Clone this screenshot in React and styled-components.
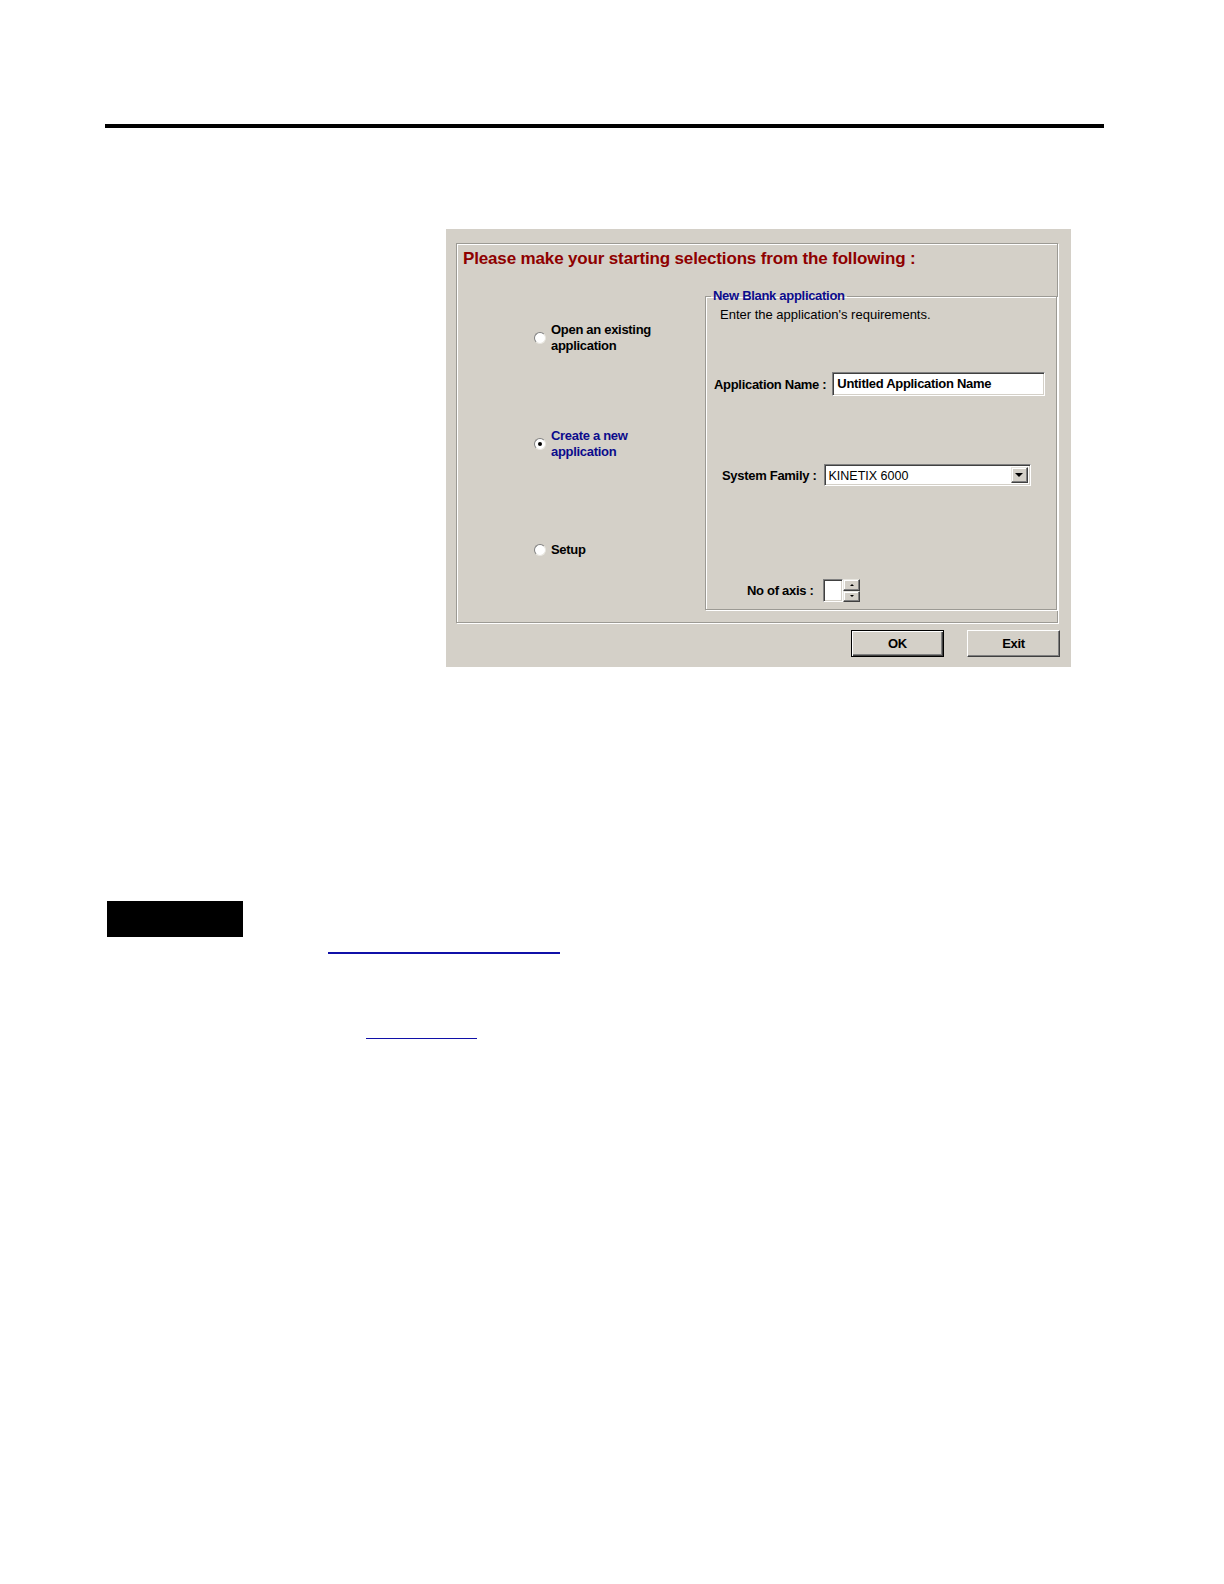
import styled, { createGlobalStyle } from "styled-components"

const Global = createGlobalStyle`
  html, body {
    margin: 0;
    background: #fff;
    overflow: hidden;
    font-family: "Liberation Sans", Arial, sans-serif;
  }
`

const Page = styled.div`
  height: 1584px;
  padding-top: 124px;
  box-sizing: border-box;
  overflow: hidden;
`

const Rule = styled.div`
  margin-left: 105px;
  width: 999px;
  height: 4px;
  background: #000;
`

const Shot = styled.div`
  margin: 101px 0 0 446px;
  width: 625px;
  height: 438px;
  box-sizing: border-box;
  background: #d4d0c8;
  padding: 14px 12px 10px 10px;
  font-size: 13px;
  color: #000;
`

const GroupBox = styled.div`
  width: 602px;
  height: 380px;
  box-sizing: border-box;
  border: 1px solid #9c9a94;
  box-shadow: inset 1px 1px 0 #fff, 1px 1px 0 #fff;
`

const Title = styled.div`
  padding: 5px 0 0 6px;
  height: 20px;
  line-height: 20px;
  font-size: 17px;
  font-weight: bold;
  letter-spacing: -0.15px;
  color: #8e0000;
`

const Content = styled.div`
  display: flex;
  margin-top: 20px;
`

const Choices = styled.div`
  width: 248px;
  padding-left: 77px;
  box-sizing: border-box;
  display: flex;
  flex-direction: column;
`

const Choice = styled.label`
  display: flex;
  align-items: center;
  margin-top: ${p => p.$top}px;
  font-weight: bold;
  letter-spacing: -0.3px;
  line-height: 16px;
  color: ${p => (p.$active ? "#0b0b8c" : "#000")};
`

const Radio = styled.span`
  position: relative;
  width: 12px;
  height: 12px;
  box-sizing: border-box;
  border-radius: 50%;
  background: #fff;
  border: 1px solid;
  border-color: #808080 #e8e6e0 #e8e6e0 #808080;
  margin-right: 5px;
  flex-shrink: 0;

  &::after {
    content: "";
    display: ${p => (p.$checked ? "block" : "none")};
    position: absolute;
    left: 3px;
    top: 3px;
    width: 4px;
    height: 4px;
    border-radius: 50%;
    background: #000;
  }
`

const Frame = styled.fieldset`
  width: 352px;
  margin: 0;
  padding: 0 0 7px 0;
  box-sizing: border-box;
  border: 1px solid #9c9a94;
  box-shadow: inset 1px 1px 0 #fff, 1px 1px 0 #fff;
`

const Legend = styled.legend`
  margin-left: 5px;
  padding: 0 2px;
  line-height: 14px;
  font-weight: bold;
  letter-spacing: -0.3px;
  color: #0b0b8c;
`

const Hint = styled.div`
  margin-top: 4px;
  padding-left: 14px;
  line-height: 16px;
`

const Row = styled.div`
  display: flex;
  align-items: center;
  margin-top: ${p => p.$top}px;
  padding-left: ${p => p.$left}px;
  gap: ${p => p.$gap}px;
`

const Label = styled.span`
  font-weight: bold;
  letter-spacing: -0.3px;
  white-space: nowrap;
`

const Sunken = styled.div`
  box-sizing: border-box;
  background: #fff;
  border: 1px solid;
  border-color: #808080 #fff #fff #808080;
  box-shadow: inset 1px 1px 0 #404040, inset -1px -1px 0 #d4d0c8;
`

const TextBox = styled(Sunken)`
  width: 213px;
  height: 24px;
  padding-left: 4px;
  line-height: 21px;
  font-weight: bold;
  letter-spacing: -0.3px;
`

const Select = styled(Sunken)`
  width: 207px;
  height: 22px;
  display: flex;
  align-items: stretch;
  padding: 2px;
`

const SelectValue = styled.span`
  flex: 1;
  line-height: 18px;
  padding-left: 2px;
  font-size: 12.5px;
`

const Raised = styled.span`
  box-sizing: border-box;
  background: #d4d0c8;
  border: 1px solid;
  border-color: #e8e6e0 #404040 #404040 #e8e6e0;
  box-shadow: inset -1px -1px 0 #808080, inset 1px 1px 0 #fff;
  display: flex;
  align-items: center;
  justify-content: center;
`

const DropButton = styled(Raised)`
  width: 17px;
`

const Arrow = styled.span`
  width: 0;
  height: 0;
  border-left: ${p => p.$size}px solid transparent;
  border-right: ${p => p.$size}px solid transparent;
  ${p => (p.$up ? "border-bottom" : "border-top")}: ${p => p.$size}px solid #000;
`

const Spinner = styled.div`
  display: flex;
  height: 23px;
`

const SpinField = styled(Sunken)`
  width: 20px;
  height: 23px;
`

const SpinButtons = styled.div`
  display: flex;
  flex-direction: column;
  width: 17px;
`

const SpinButton = styled(Raised)`
  flex: 1;
`

const Actions = styled.div`
  display: flex;
  justify-content: flex-end;
  gap: 23px;
  margin-top: 7px;
  margin-right: -1px;
`

const Button = styled.button`
  width: 93px;
  height: 27px;
  box-sizing: border-box;
  background: #d4d0c8;
  font-family: inherit;
  font-size: 13px;
  font-weight: bold;
  letter-spacing: -0.3px;
  color: #000;
  padding: 0;
  border: 1px solid;
  border-color: ${p => (p.$default ? "#000" : "#fff #404040 #404040 #fff")};
  box-shadow: ${p =>
    p.$default
      ? "inset 1px 1px 0 #fff, inset -1px -1px 0 #404040, inset -2px -2px 0 #808080"
      : "inset -1px -1px 0 #808080"};
`

const Note = styled.div`
  display: flex;
  margin-top: 234px;
  padding-left: 107px;
`

const Tag = styled.div`
  width: 136px;
  height: 36px;
  background: #000;
`

const Refs = styled.div`
  display: flex;
  flex-direction: column;
  margin-left: ${p => p.$left}px;
`

const Ref = styled.a`
  display: block;
  width: ${p => p.$w}px;
  margin-top: ${p => p.$top}px;
  margin-left: ${p => p.$left || 0}px;
  border-bottom: ${p => p.$thick}px solid #1010a8;
`

export default function App() {
  return (
    <Page>
      <Global />
      <Rule />
      <Shot>
        <GroupBox>
          <Title>Please make your starting selections from the following :</Title>
          <Content>
            <Choices>
              <Choice $top={33}>
                <Radio />
                <span>Open an existing<br />application</span>
              </Choice>
              <Choice $top={74} $active>
                <Radio $checked />
                <span>Create a new<br />application</span>
              </Choice>
              <Choice $top={82}>
                <Radio />
                <span>Setup</span>
              </Choice>
            </Choices>
            <Frame>
              <Legend>New Blank application</Legend>
              <Hint>Enter the application's requirements.</Hint>
              <Row $top={49} $left={8} $gap={6}>
                <Label>Application Name :</Label>
                <TextBox>Untitled Application Name</TextBox>
              </Row>
              <Row $top={68} $left={16} $gap={7}>
                <Label>System Family :</Label>
                <Select>
                  <SelectValue>KINETIX 6000</SelectValue>
                  <DropButton><Arrow $size={4} /></DropButton>
                </Select>
              </Row>
              <Row $top={93} $left={41} $gap={10}>
                <Label>No of axis :</Label>
                <Spinner>
                  <SpinField />
                  <SpinButtons>
                    <SpinButton><Arrow $size={2} $up /></SpinButton>
                    <SpinButton><Arrow $size={2} /></SpinButton>
                  </SpinButtons>
                </Spinner>
              </Row>
            </Frame>
          </Content>
        </GroupBox>
        <Actions>
          <Button $default>OK</Button>
          <Button>Exit</Button>
        </Actions>
      </Shot>
      <Note>
        <Tag />
        <Refs $left={85}>
          <Ref $w={232} $top={51} $thick={2} />
          <Ref $w={111} $top={84} $left={38} $thick={1} />
        </Refs>
      </Note>
    </Page>
  )
}
